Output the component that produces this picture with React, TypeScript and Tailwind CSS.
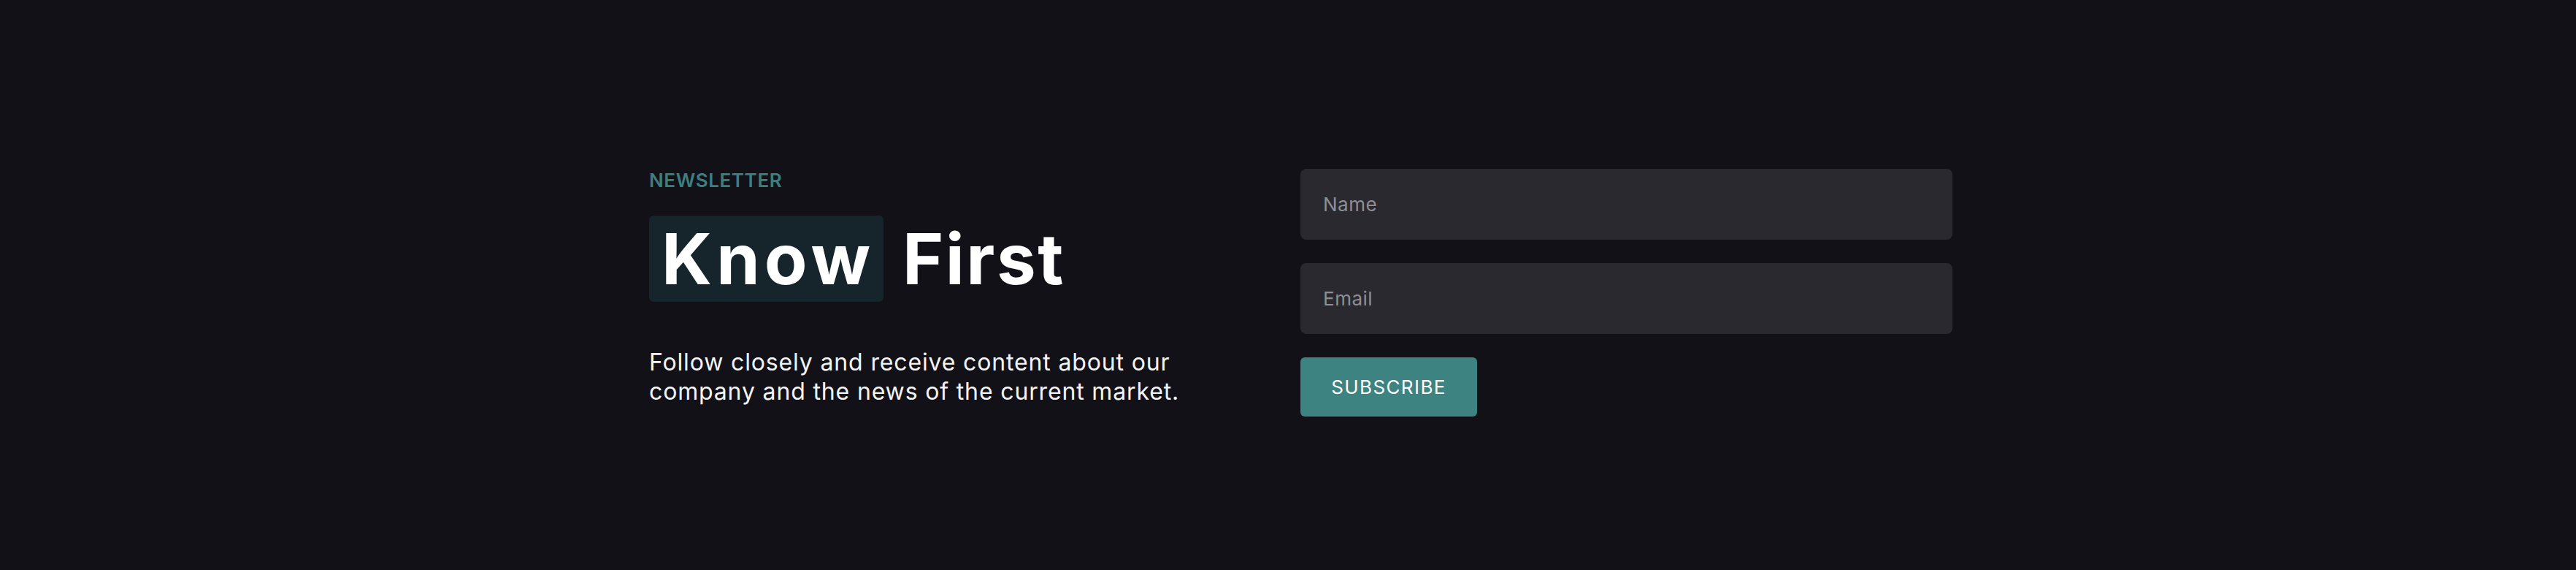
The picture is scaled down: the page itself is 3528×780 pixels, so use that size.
import React from "react";

const font = { fontFamily: "Inter, 'Noto Sans', sans-serif" };

export default function App() {
  return (
    <div
      className="w-full h-[780px] bg-[#121117] flex items-start pl-[889px] pt-[231px]"
      style={font}
    >
      <div className="w-[892px] flex flex-col">
        <div className="text-[26px] leading-[31px] font-semibold text-[#3b7f81] tracking-[0.6px]">
          NEWSLETTER
        </div>
        <h1 className="mt-[33px] flex items-baseline gap-[26px] text-[96px] leading-[98px] font-bold text-white">
          <span className="bg-[#16252b] rounded-md pl-[17px] pr-[12px] py-[10px] tracking-[6px]">Know</span>
          <span className="tracking-[2.5px]">First</span>
        </h1>
        <p className="mt-[63px] text-[32px] leading-[40px] font-normal text-[#f4f4f5] tracking-[0.85px]">
          Follow closely and receive content about our
          <br />
          company and the news of the current market.
        </p>
      </div>
      <div className="w-[893px] flex flex-col gap-[32px]">
        <input
          type="text"
          placeholder="Name"
          className="h-[97px] w-full rounded-lg bg-[#2a292f] pl-[31px] text-[26px] tracking-[0.5px] text-white placeholder:text-[#8f8e94] outline-none"
        />
        <input
          type="email"
          placeholder="Email"
          className="h-[97px] w-full rounded-lg bg-[#2a292f] pl-[31px] text-[26px] tracking-[0.5px] text-white placeholder:text-[#8f8e94] outline-none"
        />
        <button className="h-[81px] w-[242px] rounded-md bg-[#3c8381] text-white text-[26px] tracking-[1.4px]">
          SUBSCRIBE
        </button>
      </div>
    </div>
  );
}
